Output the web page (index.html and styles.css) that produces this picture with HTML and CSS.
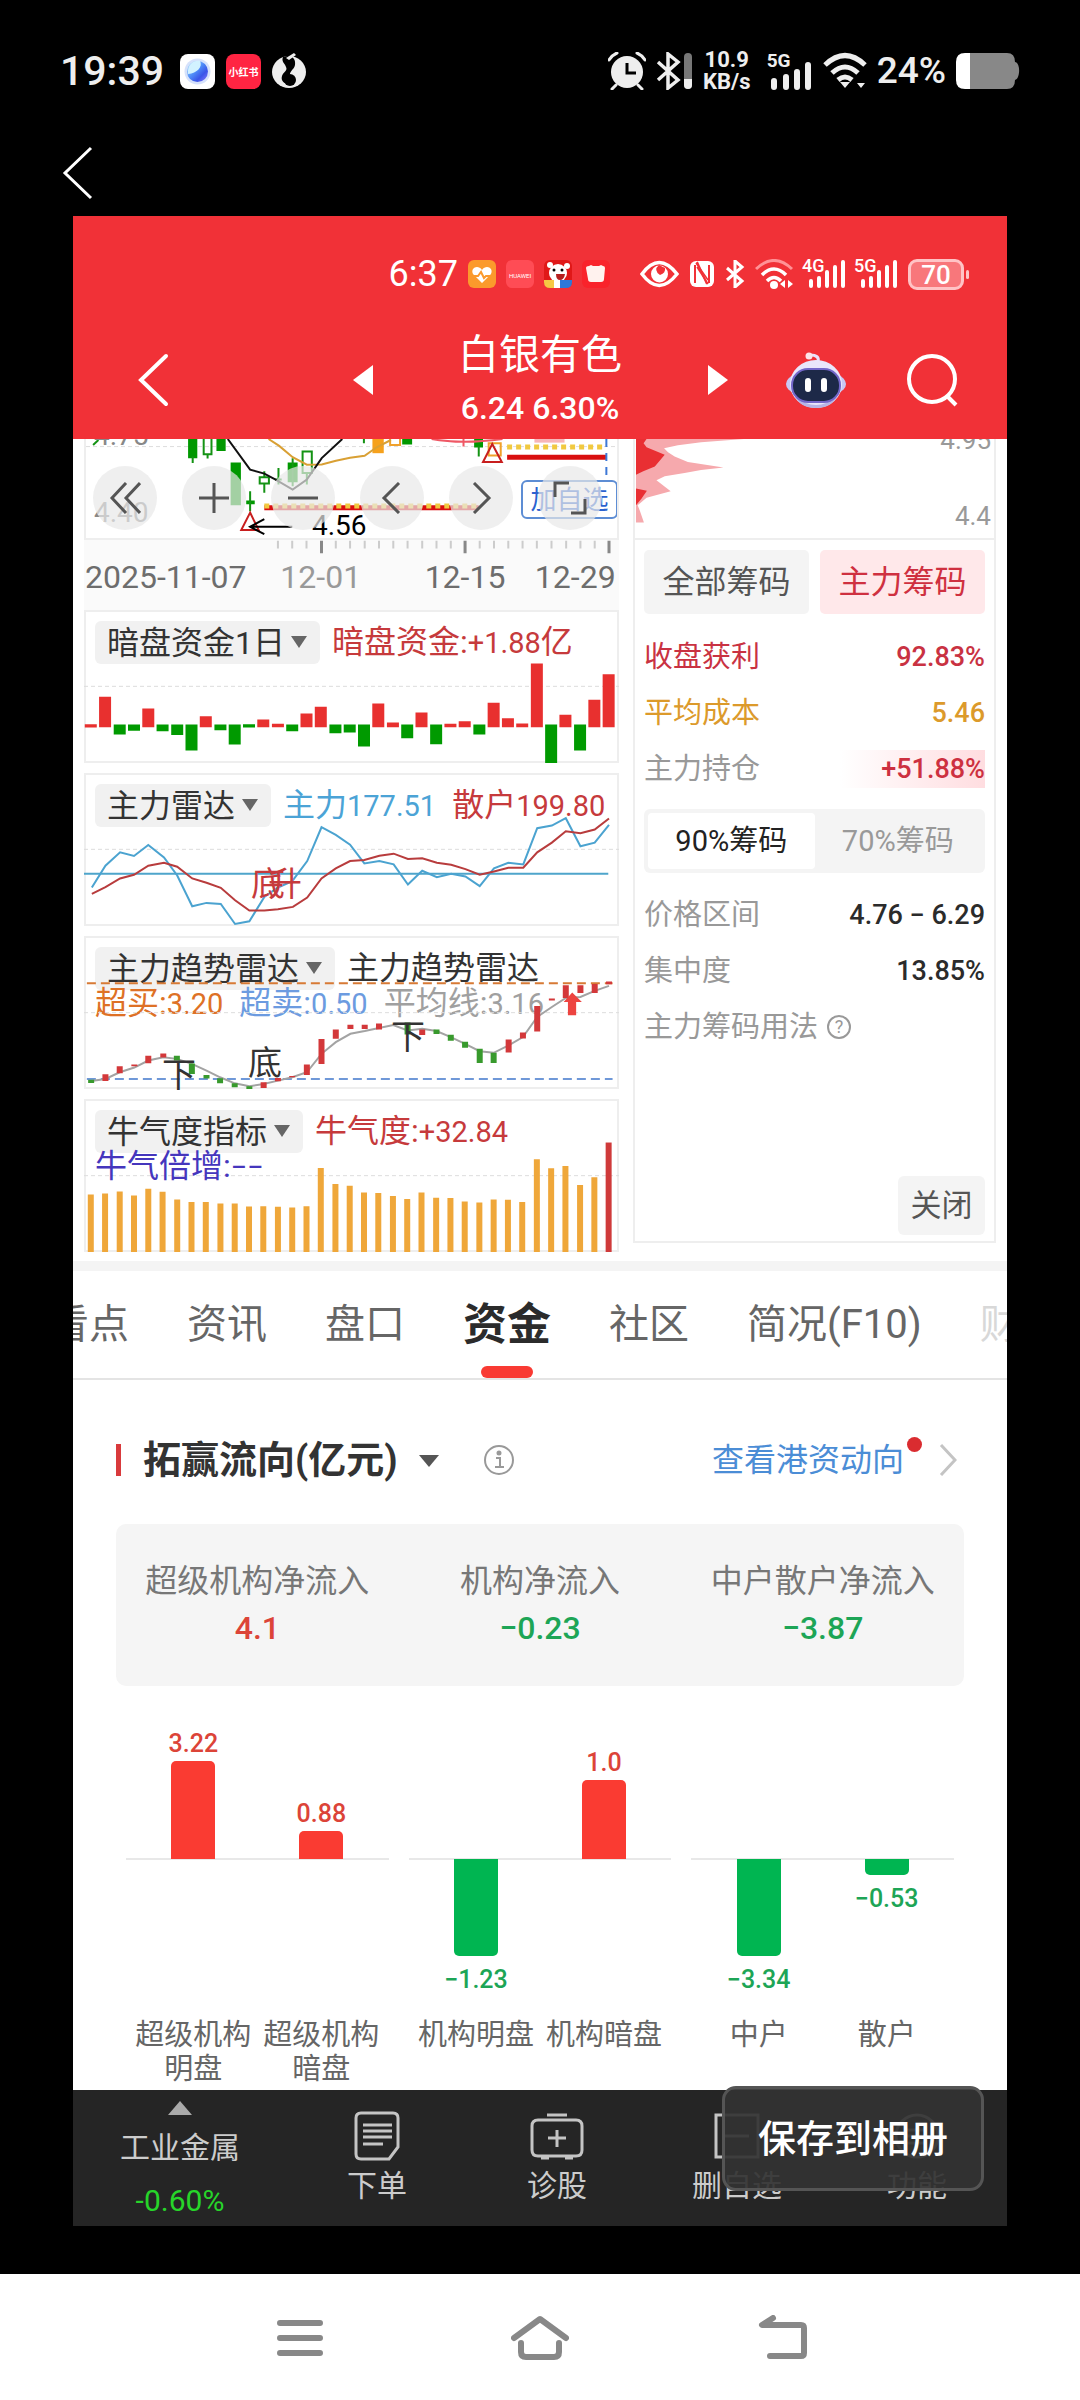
FILE: index.html
```html
<!DOCTYPE html>
<html lang="zh-CN">
<head>
<meta charset="utf-8">
<meta name="viewport" content="width=device-width, initial-scale=1">
<title>白银有色</title>
<link rel="stylesheet" href="styles.css">
</head>
<body>
<div class="device-status">
  <span class="device-time">19:39</span>
  <div class="notices">
    <svg width="35" height="35" viewBox="0 0 35 35"><defs><linearGradient id="lens" x1="0" y1="0" x2="1" y2="1"><stop offset="0" stop-color="#c4f1ff"/><stop offset=".45" stop-color="#4f8df8"/><stop offset=".7" stop-color="#3a55e8"/><stop offset="1" stop-color="#8d7cff"/></linearGradient></defs><rect width="35" height="35" rx="8" fill="#fff"/><circle cx="17.500" cy="17.500" r="13" fill="#d6e2fb"/><circle cx="17.500" cy="17.500" r="10.500" fill="url(#lens)"/><path d="M8 20C7 10 14 6 20 7c3 6-3 12-12 13z" fill="#d2f2ff"/></svg>
    <span class="red-app">小红书</span>
    <svg width="34" height="36" viewBox="0 0 34 36"><ellipse cx="17" cy="19" rx="17" ry="16" fill="#eee"/><path d="M11 4c9-3 13 2 12 8-1 5-6 6-5 11 0 4 4 5 3 7-6 3-13-1-11-7 1-4 6-5 4-9-1-4-5-5-3-10z" fill="#000"/><circle cx="18" cy="27" r="6" fill="#000"/><path d="M14 5l8-5 2 2-7 5z" fill="#eee"/></svg>
  </div>
  <div class="device-icons">
    <svg width="38" height="38" viewBox="0 0 38 38"><circle cx="19" cy="20" r="16" fill="#eee"/><path d="M1 8q3-5 8-7M37 8q-3-5-8-7M8 33l-4 4M30 33l4 4" stroke="#eee" stroke-width="3" stroke-linecap="round"/><path d="M19 11v10h9" fill="none" stroke="#000" stroke-width="3"/></svg>
    <svg width="37" height="38" viewBox="0 0 37 38"><path d="M2 10l20 18-10 8V2l10 8L2 28" fill="none" stroke="#eee" stroke-width="3.500"/><rect x="28" y="1" width="8" height="36" rx="4" fill="#777"/><path d="M28 27h8v6a4 4 0 0 1-8 0z" fill="#eee"/></svg>
    <span class="speed">10.9<br>KB/s</span>
    <span class="cell"><b>5G</b><svg width="44" height="38" viewBox="0 0 44 38"><path d="M5 29v6M17 25v10M28 20v15M39 13v22" stroke="#eee" stroke-width="6" stroke-linecap="round"/></svg></span>
    <svg width="44" height="38" viewBox="0 0 44 38"><path d="M2 13q20-19 40 0M9 21q13-12 26 0M15 28q7-6 14 0" fill="none" stroke="#eee" stroke-width="5"/><path d="M17 30h10l-5 6zM34 31h8l-4 5z" fill="#eee"/></svg>
    <span class="charge">24%</span>
    <svg width="64" height="36" viewBox="0 0 64 36"><path d="M10 0h41q8 0 8 9c6 1 5 17 0 18q0 9-8 9H10z" fill="#888"/><path d="M14 0H9Q0 0 0 9v18q0 9 9 9h5z" fill="#fff"/></svg>
  </div>
</div>
<div class="viewer-bar">
  <button class="plain" aria-label="返回"><svg width="32" height="54" viewBox="0 0 32 54"><path d="M29 2L3 27l26 25" fill="none" stroke="#fff" stroke-width="3"/></svg></button>
</div>

<main class="photo">
  <header class="app-header">
    <div class="app-status">
      <span class="app-time">6:37</span>
      <svg width="28" height="28" viewBox="0 0 28 28"><rect width="28" height="28" rx="6" fill="#fb9a2c"/><path d="M14 23L5 14c-3-6 5-10 9-4 4-6 12-2 9 4z" fill="#fff"/><path d="M3 16h7l3-4 3 6 2-2h7" stroke="#fb9a2c" fill="none" stroke-width="2"/></svg>
      <span class="store">HUAWEI</span>
      <svg width="28" height="28" viewBox="0 0 28 28"><rect width="28" height="28" rx="6" fill="#e01818"/><circle cx="14" cy="13" r="9" fill="#fff"/><circle cx="6" cy="5" r="3" fill="#fff"/><circle cx="23" cy="6" r="3" fill="#fff"/><circle cx="10" cy="10" r="1.500"/><circle cx="18" cy="10" r="1.500"/><path d="M12 14h9q-1 6-5 6t-4-6" fill="#b51f1f"/><path d="M0 20h10v8H6q-6 0-6-6z" fill="#f6c744"/><path d="M16 20h12v2q0 6-6 6h-6z" fill="#2e78d8"/><path d="M10 20h6v8h-6z" fill="#fff"/></svg>
      <svg class="last-notice" width="28" height="28" viewBox="0 0 28 28"><rect width="28" height="28" rx="6" fill="#f9232b"/><path d="M4 8q0-2 3-2l2-1 2 1h6l2-1 2 1q2 0 2 2l-1 11q0 3-3 3H9q-3 0-3-3z" fill="#fff2ee"/></svg>
      <svg width="39" height="28" viewBox="0 0 39 28"><path d="M2 14Q19-9 37 14 19 37 2 14z" fill="none" stroke="#fff" stroke-width="3.500"/><circle cx="19.500" cy="14" r="8.500" fill="#fff"/><path d="M19 5q-6 5 1 10 6-2 5-7z" fill="#f13137"/></svg>
      <svg width="26" height="28" viewBox="0 0 26 28"><rect x="1" y="1" width="24" height="26" rx="6" fill="#fff"/><path d="M6 23V5M8 2l10 22M20 23V5" fill="none" stroke="#f13137" stroke-width="2"/><path d="M8 7l11 17M7 3l12 17" fill="none" stroke="#f13137" stroke-width="1.500"/></svg>
      <svg width="20" height="28" viewBox="0 0 20 28"><path d="M2 8l15 13-7 6V1l7 6L2 20" fill="none" stroke="#fff" stroke-width="3"/></svg>
      <svg width="39" height="30" viewBox="0 0 39 30"><path d="M1 10q18-17 36 0" fill="none" stroke="#ff9296" stroke-width="3"/><path d="M7 16q12-12 24 0M12 22q7-7 14 0" fill="none" stroke="#fff" stroke-width="3.500"/><circle cx="19" cy="26" r="4" fill="#fff"/><path d="M30 21v8l-5-4zM33 21v8l5-4z" fill="#fff"/></svg>
      <span class="mobile"><small>4G</small><svg width="42" height="28" viewBox="0 0 42 28"><path d="M7 21v5M15 18v8M23 12v14M31 7v19M39 2v24" stroke="#fff" stroke-width="4" stroke-linecap="round"/></svg></span>
      <span class="mobile"><small>5G</small><svg width="42" height="28" viewBox="0 0 42 28"><path d="M7 21v5M15 18v8M23 12v14M31 7v19M39 2v24" stroke="#fff" stroke-width="4" stroke-linecap="round"/></svg></span>
      <span class="battery">70</span>
    </div>
    <div class="title-row">
      <button class="plain back" aria-label="返回"><svg width="32" height="54" viewBox="0 0 32 54"><path d="M29 3L4 27l25 24" fill="none" stroke="#fff" stroke-width="4" stroke-linecap="round"/></svg></button>
      <div class="switcher">
        <button class="plain" aria-label="上一只"><svg width="20" height="32" viewBox="0 0 20 32"><path d="M20 1v30L0 16z" fill="#fff"/></svg></button>
        <div class="stock"><h1>白银有色</h1><p>6.24 6.30%</p></div>
        <button class="plain" aria-label="下一只"><svg width="20" height="32" viewBox="0 0 20 32"><path d="M0 1v30l20-15z" fill="#fff"/></svg></button>
      </div>
      <div class="tools">
        <button class="plain" aria-label="助手"><svg width="62" height="56" viewBox="0 0 62 56"><path d="M33 10q2-7-8-7" fill="none" stroke="#e8e2fb" stroke-width="3"/><circle cx="24" cy="4" r="3.500" fill="#fde3e8"/><ellipse cx="31" cy="32" rx="30" ry="14" fill="#c9c8f4"/><ellipse cx="31" cy="32" rx="26" ry="24" fill="#e9e6fb"/><path d="M10 44q21 18 42 0-5 12-21 12T10 44" fill="#b7b5e6"/><rect x="7" y="17" width="48" height="33" rx="16" fill="#1d2948" stroke="#7367c9" stroke-width="2"/><path d="M23 29v8M39 29v8" stroke="#fff" stroke-width="6" stroke-linecap="round"/></svg></button>
        <button class="plain" aria-label="搜索"><svg width="52" height="54" viewBox="0 0 52 54"><circle cx="25" cy="26" r="23" fill="none" stroke="#fff" stroke-width="4"/><path d="M40 43l9 9" stroke="#fff" stroke-width="4"/></svg></button>
      </div>
    </div>
  </header>

  <section class="charts">
    <div class="indicators">
      <div class="kline">
        <svg class="plot" viewBox="40 27 1498 300" preserveAspectRatio="none">
          <path class="dots" d="M40 50H1538"/>
          <g fill="#009800"><path d="M328 27h26v58h-26zM408 27h26v36h-26zM448 98h29v130h-29zM492 213h24v12h-24zM609 98h28v60h-28zM932 27h28v17h-28zM1135 27h25v26h-25z"/></g>
          <path class="ln green" d="M341 80V100M372 27V73H394V27M383 73V86M530 143H556V162H530ZM543 125V143M543 162V190M503 185V246M583 115V165M574 150H592M623 85V170M651 65H677V130H651ZM663 130V165M824 27V40M1148 50V80M60 45L75 30"/>
          <path d="M848 27h32v43h-32z" fill="#f6a11c"/>
          <path class="ln" stroke="#f0a12b" d="M898 27V45H926V27M1176 40H1210V77H1176Z"/>
          <path class="ln" stroke="#d9a034" d="M555 27L585 48 623 82 663 105 705 104 745 93 785 84 826 78 860 52 900 30"/>
          <path class="ln" stroke="#111" d="M440 27L503 120 543 132 575 150 623 180 663 150 705 85 763 27"/>
          <path class="ln" stroke="#ef5865" d="M1015 27Q1100 44 1215 27M1105 27V50"/>
          <path d="M1305 27h85v11h-85z" fill="#f7b6b8"/>
          <path class="ln thick" stroke="#d90f0f" d="M1228 82H1508M543 235H1148"/>
          <path class="ln thick" stroke="#f1c940" stroke-dasharray="5 4" d="M1228 51H1502M543 230H1148"/>
          <path class="ln" stroke="#3d78d6" stroke-dasharray="8 6" d="M1508 27V150"/>
          <path class="ln" stroke="#c81e1e" d="M1186 42L1160 97H1213ZM503 250L478 303H527Z"/>
          <path class="ln" stroke="#000" d="M622 293H503M543 270L503 293 543 315"/>
        </svg>
        <span class="price top">4.75</span>
        <span class="price low">4.40</span>
        <span class="price mark">4.56</span>
        <button class="watch">加自选</button>
        <div class="controls">
          <button aria-label="最早"><svg width="32" height="32" viewBox="0 0 32 32"><path d="M17 1L3 16l14 15M31 1L17 16l14 15"/></svg></button>
          <button aria-label="放大"><svg width="32" height="32" viewBox="0 0 32 32"><path d="M16 1v30M1 16h30"/></svg></button>
          <button aria-label="缩小"><svg width="32" height="32" viewBox="0 0 32 32"><path d="M1 16h30"/></svg></button>
          <button aria-label="左移"><svg width="32" height="32" viewBox="0 0 32 32"><path d="M23 1L8 16l15 15"/></svg></button>
          <button aria-label="右移"><svg width="32" height="32" viewBox="0 0 32 32"><path d="M9 1l15 15L9 31"/></svg></button>
          <button aria-label="全屏"><svg width="34" height="34" viewBox="0 0 34 34"><path d="M2 16V2h14M32 18v14H18" stroke-width="4"/></svg></button>
        </div>
      </div>
      <div class="axis">
        <svg class="ticks" viewBox="40 0 1498 40" preserveAspectRatio="none"><path class="ln" stroke="#ccc" d="M583 2V24M623 2V24M663 2V24M745 2V24M785 2V24M826 2V24M866 2V24M906 2V24M946 2V24M987 2V24M1027 2V24M1067 2V24M1148 2V24M1188 2V24M1228 2V24M1268 2V24M1308 2V24M1349 2V24M1390 2V24M1430 2V24M1470 2V24"/><path class="ln bold" stroke="#888" d="M705 2V38M1107 2V38M1510 2V38"/></svg>
        <div class="dates"><span>2025-11-07</span><span class="faint">12-01</span><span>12-15</span><span>12-29</span></div>
      </div>

      <article class="panel">
        <svg class="plot" viewBox="40 30 1498 457" preserveAspectRatio="none"><path class="dots" d="M40 258H1538"/>
          <path class="ln bar" stroke="#e8302f" d="M59 371V381M99 289V380M220 324V380M381 347V380M542 357V380M583 370V380M663 339V380M703 319V380M864 309V380M905 366V380M985 336V380M1066 370V380M1106 362V380M1187 307V380M1227 353V380M1267 369V380M1308 190V380M1388 343V380M1469 298V380M1509 222V380"/>
          <path class="ln bar" stroke="#009a00" d="M140 372V402M180 372V391M260 372V392M301 372V403M341 372V450M422 372V389M462 372V432M502 371V381M623 372V392M744 372V398M784 372V396M824 372V438M945 372V413M1026 372V431M1147 372V402M1348 372V487M1429 372V450"/></svg>
        <div class="legend"><label class="picker dark-fund"><select aria-label="指标一"><option>暗盘资金1日</option></select></label><span class="red">暗盘资金:<i>+1.88</i>亿</span></div>
      </article>

      <article class="panel">
        <svg class="plot" viewBox="40 520 1498 457" preserveAspectRatio="none"><path class="dots" d="M40 748H1538"/>
          <path class="ln" stroke="#4ea5cb" d="M40 821H1508"/>
          <path class="ln" stroke="#4ba3d0" d="M62 862L100 797 141 757 180 768 220 735 264 772 301 826 343 918 383 908 423 911 463 971 503 963 545 890 583 862 623 843 665 783 705 682 745 705 785 734 825 790 867 783 907 793 947 853 987 812 1028 831 1068 821 1108 829 1148 858 1188 805 1228 788 1270 793 1309 685 1350 677 1389 655 1430 739 1470 728 1510 675"/>
          <path class="ln" stroke="#b83c3d" d="M62 881L100 861 141 835 180 824 220 797 264 788 301 800 343 835 383 848 423 863 463 900 503 931 545 931 583 927 625 920 665 892 705 835 745 805 785 783 825 780 867 767 907 761 947 777 987 775 1028 788 1068 794 1108 807 1148 824 1188 814 1228 803 1270 803 1309 757 1350 728 1389 694 1430 700 1470 689 1510 656"/></svg>
        <div class="legend"><label class="picker radar"><select aria-label="指标二"><option>主力雷达</option></select></label><span class="sky">主力<i>177.51</i></span><span class="red retail">散户<i>199.80</i></span></div>
        <span class="sign s1 red">底</span><span class="sign s2 red">升</span>
      </article>

      <article class="panel">
        <div class="legend"><label class="picker trend"><select aria-label="指标三"><option>主力趋势雷达</option></select></label><span>主力趋势雷达</span></div>
        <div class="legend second"><span class="orange">超买:<i>3.20</i></span><span class="blue">超卖:<i>0.50</i></span><span class="gray">平均线:<i>3.16</i></span></div>
        <svg class="plot" viewBox="40 18 1498 457" preserveAspectRatio="none"><path class="dots" d="M40 247H1538"/>
          <path class="ln" stroke="#d77a35" stroke-dasharray="9 5" d="M48 159H1520"/><path class="ln" stroke="#6f98d8" stroke-dasharray="9 5" d="M48 445H1520"/>
          <path class="ln" stroke="#a3a3a3" d="M60 451L100 445 140 425 181 411 220 390 262 380 300 385 342 400 383 420 421 440 462 458 503 467 543 460 583 450 623 440 664 425 705 370 745 335 786 310 826 302 866 293 906 284 946 300 987 295 1027 302 1067 320 1107 340 1148 362 1187 367 1229 345 1269 320 1309 260 1350 230 1389 203 1430 200 1470 182 1510 167"/>
          <path class="ln slim" stroke="#d3383a" d="M100 431V451M140 407V428M181 402V407M220 376V398M262 369V381M543 455V472M583 442V452M623 436V440M664 402V433M705 326V400M745 297V325M786 283V296M826 283V296M866 279V297M987 297V314M1229 327V366M1269 306V324M1309 227V303M1350 205V211M1389 165V203M1430 165V188M1470 161V188M1510 154V162"/>
          <path class="ln slim" stroke="#389a2d" d="M60 447V457M300 376V390M342 399V430M383 433V444M421 443V458M462 458V470M503 467V475M946 276V312M1027 297V311M1067 313V331M1107 334V352M1148 355V397M1187 367V397"/>
          <path d="M1407 187L1434 215H1418V255H1395V215H1383Z" fill="#ed4440"/></svg>
        <span class="sign t1">下</span><span class="sign t2">底</span><span class="sign t3">下</span>
      </article>

      <article class="panel">
        <svg class="plot" viewBox="40 508 1498 457" preserveAspectRatio="none"><path class="dots" d="M40 737H1538"/>
          <path class="ln slim" stroke="#efa73a" d="M59 793V965M99 790V965M140 784V965M180 796V965M220 776V965M260 785V965M301 808V965M341 816V965M381 816V965M422 820V965M462 820V965M502 829V965M542 828V965M583 830V965M623 832V965M663 828V965M703 714V965M744 762V965M784 767V965M824 787V965M864 789V965M905 798V965M945 807V965M985 787V965M1026 803V965M1066 804V965M1106 814V965M1147 817V965M1187 808V965M1227 809V965M1267 816V965M1308 688V965M1348 715V965M1388 708V965M1429 765V965M1469 742V965"/><path class="ln slim" stroke="#cf3a3a" d="M1509 638V965"/></svg>
        <div class="legend"><label class="picker bull"><select aria-label="指标四"><option>牛气度指标</option></select></label><span class="red">牛气度:<i>+32.84</i></span></div>
        <div class="legend second"><span class="violet">牛气倍增:<i>−−</i></span></div>
      </article>
    </div>

    <aside class="chips">
      <div class="distribution">
        <svg class="plot" viewBox="40 27 1087 300" preserveAspectRatio="none"><path fill="#f6a9ad" d="M43 27H370L240 37 170 46 128 55 140 67 160 80 200 97 308 113 240 121 190 130 130 140 105 152 148 185 75 205 48 228 55 245 67 280H43Z"/><path fill="#e92f33" d="M43 27H75L66 40 75 52 130 75 100 110 65 125 43 135ZM43 177L76 184 60 207 43 228Z"/></svg>
        <span class="level high">4.95</span><span class="level">4.4</span>
      </div>
      <div class="chip-body">
        <div class="pair"><button>全部筹码</button><button class="on">主力筹码</button></div>
        <div class="row profit"><span>收盘获利</span><b>92.83%</b></div>
        <div class="row cost"><span>平均成本</span><b>5.46</b></div>
        <div class="row hold"><span>主力持仓</span><b>+51.88%</b></div>
        <div class="segment"><button class="on">90%筹码</button><button>70%筹码</button></div>
        <div class="row"><span>价格区间</span><b>4.76 − 6.29</b></div>
        <div class="row"><span>集中度</span><b>13.85%</b></div>
        <div class="row help"><span>主力筹码用法</span><button class="question" aria-label="帮助">?</button></div>
        <button class="close">关闭</button>
      </div>
    </aside>
  </section>

  <nav class="tabs">
    <a href="#view">看点</a><a href="#news">资讯</a><a href="#quote">盘口</a><a href="#fund" class="active">资金</a><a href="#club">社区</a><a href="#f10">简况(F10)</a><a href="#finance" class="fading">财务</a>
  </nav>

  <section class="flow" id="fund">
    <div class="flow-head">
      <label class="flow-title"><select aria-label="资金流向"><option>拓赢流向(亿元)</option></select></label>
      <button class="plain info" aria-label="说明"><svg width="32" height="32" viewBox="0 0 32 32" fill="none" stroke="#999" stroke-width="2"><circle cx="16" cy="16" r="14"/><path d="M13 14h4v9M12 23h9"/><circle cx="16" cy="9" r="1.500" fill="#999"/></svg></button>
      <a class="hk" href="#hk">查看港资动向<svg width="18" height="32" viewBox="0 0 18 32"><path d="M2 1l14 15L2 31" fill="none" stroke="#c4c4c4" stroke-width="3"/></svg></a>
    </div>
    <div class="totals">
      <div><span>超级机构净流入</span><b class="up">4.1</b></div>
      <div><span>机构净流入</span><b class="down">−0.23</b></div>
      <div><span>中户散户净流入</span><b class="down">−3.87</b></div>
    </div>
    <div class="bars">
      <div class="group">
        <div class="col"><div class="above up"><b>3.22</b><i style="height:98px"></i></div><div class="below"></div><span>超级机构明盘</span></div>
        <div class="col"><div class="above up"><b>0.88</b><i style="height:28px"></i></div><div class="below"></div><span>超级机构暗盘</span></div>
      </div>
      <div class="group">
        <div class="col"><div class="above"></div><div class="below down"><i style="height:97px"></i><b>−1.23</b></div><span>机构明盘</span></div>
        <div class="col"><div class="above up"><b>1.0</b><i style="height:79px"></i></div><div class="below"></div><span>机构暗盘</span></div>
      </div>
      <div class="group">
        <div class="col"><div class="above"></div><div class="below down"><i style="height:97px"></i><b>−3.34</b></div><span>中户</span></div>
        <div class="col"><div class="above"></div><div class="below down"><i style="height:16px"></i><b>−0.53</b></div><span>散户</span></div>
      </div>
    </div>
  </section>

  <nav class="dock">
    <a class="index" href="#metal"><svg width="24" height="14" viewBox="0 0 24 14"><path d="M12 0l12 14H0z" fill="#aaa"/></svg><span>工业金属</span><b>-0.60%</b></a>
    <a href="#order"><svg width="46" height="50" viewBox="0 0 46 50"><path d="M7 2h32q5 0 5 5v29l-9 12H7q-5 0-5-5V7q0-5 5-5zM9 14h29M9 20h29M9 26h29M9 33h20"/></svg><span>下单</span></a>
    <a href="#diagnose"><svg width="54" height="50" viewBox="0 0 54 50"><path d="M17 4h20M8 9h38q6 0 6 6v24q0 6-6 6H8q-6 0-6-6V15q0-6 6-6zM27 19v17M18 27h18M11 47h8M35 47h8"/></svg><span>诊股</span></a>
    <a href="#remove"><svg width="46" height="50" viewBox="0 0 46 50"><path d="M2 4h42v42H2zM11 25h24"/></svg><span>删自选</span></a>
    <a href="#more"><svg width="46" height="50" viewBox="0 0 46 50"><circle cx="23" cy="25" r="21"/><path d="M13 19h20M13 25h20M13 32h20"/></svg><span>功能</span></a>
    <button class="save">保存到相册</button>
  </nav>
</main>

<nav class="system-nav">
  <button class="plain" aria-label="最近任务"><svg width="46" height="44" viewBox="0 0 46 44"><path d="M3 7h40M3 22h40M3 37h40"/></svg></button>
  <button class="plain" aria-label="主页"><svg width="58" height="46" viewBox="0 0 58 46"><path d="M3 23L29 4l26 19M10 28v9q0 5 5 5h28q5 0 5-5v-9"/></svg></button>
  <button class="plain" aria-label="返回"><svg width="50" height="46" viewBox="0 0 50 46"><path d="M16 3L5 10h39q3 0 3 3v25q0 3-3 3H13"/></svg></button>
</nav>
</body>
</html>
```
FILE: styles.css
```css
* { box-sizing: border-box; }
body { margin: 0; background: #000; color: #333; font: 32px/40px Roboto, "Noto Sans CJK SC", sans-serif; }
h1, p { margin: 0; font-weight: 400; }
i { font-style: normal; }
b { font-weight: 500; }
a { color: inherit; text-decoration: none; }
svg { display: block; flex: none; }
button, select { font: inherit; color: inherit; border: 0; padding: 0; margin: 0; background: none; }
select { appearance: none; outline: 0; }
.plain { display: flex; }

.device-status { display: flex; align-items: center; padding: 50px 60px 0 60px; height: 92px; color: #eee; }
.device-time { font-size: 41px; font-weight: 500; width: 120px; }
.notices, .device-icons { display: flex; align-items: center; gap: 11px; }
.device-icons { margin-left: auto; gap: 10px; }
.red-app { width: 35px; height: 35px; border-radius: 8px; background: #ff2442; color: #fff; font: 700 10px/35px "Noto Sans CJK SC", sans-serif; text-align: center; }
.speed { font-size: 22px; line-height: 22px; font-weight: 700; text-align: center; width: 48px; margin-right: 8px; }
.cell { position: relative; }
.cell b { position: absolute; left: -2px; top: -1px; font-size: 19px; line-height: 20px; font-weight: 700; }
.charge { font-size: 37px; font-weight: 500; }
.viewer-bar { padding: 54px 62px 0; height: 124px; }

.photo { margin: 0 73px; background: #fff; overflow: hidden; }
.app-header { background: #f13137; color: #fff; padding: 40px 37px 10px 64px; }
.app-status { display: flex; align-items: center; justify-content: flex-end; gap: 10px; height: 36px; }
.app-time { font-size: 36px; }
.store { width: 28px; height: 28px; border-radius: 6px; background: #ff4c55; font-size: 6px; line-height: 32px; text-align: center; }
.last-notice { margin-right: 20px; }
.mobile { position: relative; }
.mobile small { position: absolute; left: -2px; top: -3px; font-size: 18px; line-height: 18px; font-weight: 500; }
.battery { position: relative; width: 56px; height: 31px; border: 3px solid #ffc3c5; border-radius: 9px; background: #f8777b; font-size: 26px; line-height: 26px; font-weight: 500; text-align: center; margin-right: 6px; }
.battery::after { content: ""; position: absolute; right: -8px; top: 8px; width: 3px; height: 9px; border-radius: 2px; background: #ffc3c5; }
.title-row { display: grid; grid-template-columns: 1fr 375px 1fr; align-items: center; height: 100px; margin: 37px 11px 0 0; }
.back { justify-self: start; }
.switcher { display: flex; justify-content: space-between; align-items: center; margin: 0 8px 0 -8px; }
.stock { text-align: center; }
.stock h1 { font-size: 41px; line-height: 52px; }
.stock p { font-size: 32px; line-height: 44px; font-weight: 500; padding-top: 5px; }
.tools { display: flex; justify-content: flex-end; align-items: center; gap: 60px; }

.charts { display: grid; grid-template-columns: 535fr 363fr; gap: 14px; padding: 0 11px 9px; border-bottom: 10px solid #f4f4f4; }
.indicators { display: flex; flex-direction: column; gap: 10px; }
.plot { position: absolute; inset: 0; width: 100%; height: 100%; }
.ln { fill: none; stroke-width: 2px; vector-effect: non-scaling-stroke; }
.green { stroke: #149314; }
.thick { stroke-width: 5px; }
.bold { stroke-width: 3px; }
.bar { stroke-width: 12px; }
.slim { stroke-width: 6px; }
.dots { stroke: #ddd; stroke-width: 1px; stroke-dasharray: 4 3; fill: none; vector-effect: non-scaling-stroke; }
.kline { position: relative; height: 101px; border: 2px solid #eee; border-top: 0; overflow: hidden; margin-bottom: -10px; }
.price { position: absolute; font-size: 28px; line-height: 30px; }
.top { left: 8px; top: -18px; color: #888; }
.low { left: 8px; top: 59px; color: #888; }
.mark { left: 226px; top: 72px; color: #000; }
.watch { position: absolute; right: -1px; top: 41px; width: 97px; height: 39px; border: 2px solid #5d8dd4; border-radius: 6px; background: #fff; color: #2b62cf; font-size: 26px; line-height: 34px; }
.controls { position: absolute; left: 7px; right: 15px; top: 27px; display: flex; justify-content: space-between; }
.controls button { width: 64px; height: 64px; border-radius: 50%; background: rgba(232, 232, 232, .7); display: flex; align-items: center; justify-content: center; }
.controls path { fill: none; stroke: #555; stroke-width: 3px; }
.axis { height: 70px; background: #fafafa; margin-bottom: -10px; color: #6d6d6d; }
.ticks { width: 100%; height: 14px; }
.dates { display: grid; grid-template-columns: 195fr 144fr 110fr 84fr; padding-left: 1px; line-height: 46px; white-space: nowrap; }
.faint { color: #999; }
.panel { position: relative; height: 153px; border: 2px solid #eee; white-space: nowrap; }
.panel .plot { inset: -2px; width: calc(100% + 4px); height: calc(100% + 4px); }
.legend { position: relative; display: flex; gap: 12px; padding: 9px 0 0 9px; line-height: 42px; }
.legend i { font-size: 29px; }
.retail { margin-left: 4px; }
.second { padding: 0 0 0 9px; margin-top: -6px; line-height: 38px; gap: 16px; }
.picker { position: relative; flex: none; height: 43px; background: #f1f1f1; border-radius: 6px; }
.picker select { width: 100%; height: 43px; padding-left: 12px; line-height: 42px; display: block; }
.picker::after { content: ""; position: absolute; right: 13px; top: 15px; border: 8px solid transparent; border-top: 12px solid #666; border-bottom: 0; }
.dark-fund { width: 225px; }
.radar { width: 176px; }
.trend { width: 240px; }
.bull { width: 208px; }
.red { color: #c63a3c; }
.sky { color: #4ba3d6; }
.orange { color: #de7126; }
.blue { color: #6c9be0; }
.gray { color: #a0a0a0; }
.violet { color: #4536bd; }
.sign { position: absolute; font-size: 34px; line-height: 36px; }
.s1 { left: 165px; top: 91px; }
.s2 { left: 182px; top: 91px; }
.t1 { left: 76px; top: 119px; }
.t2 { left: 162px; top: 107px; }
.t3 { left: 305px; top: 81px; }

.chips { display: flex; flex-direction: column; border: 2px solid #eee; border-top: 0; margin-bottom: 9px; }
.distribution { position: relative; height: 101px; border-bottom: 2px solid #eee; overflow: hidden; }
.level { position: absolute; right: 3px; top: 62px; font-size: 26px; line-height: 30px; color: #999; }
.high { top: -14px; }
.chip-body { flex: 1; display: flex; flex-direction: column; padding: 10px 9px 6px; font-size: 29px; }
.pair { display: grid; grid-template-columns: 1fr 1fr; gap: 11px; margin-bottom: 15px; font-size: 32px; line-height: 64px; color: #555; }
.pair button { background: #f4f4f4; border-radius: 5px; }
.pair .on { background: #ffe8ea; color: #cf3040; }
.row { display: flex; align-items: center; justify-content: space-between; height: 56px; color: #999; }
.row b { color: #2b2b2b; font-size: 27px; line-height: 38px; }
.profit span, .profit b { color: #c93242; }
.cost span, .cost b { color: #dc9a2b; }
.hold b { color: #cd3040; background: linear-gradient(90deg, #fff, #ffdde0); width: 145px; text-align: right; }
.segment { display: grid; grid-template-columns: 1fr 1fr; padding: 4px; margin: 12px 0 14px; background: #f4f4f4; border-radius: 6px; line-height: 56px; color: #999; }
.segment .on { background: #fff; color: #222; border-radius: 4px; }
.help { justify-content: flex-start; gap: 9px; }
.question { width: 24px; height: 24px; border: 2px solid #999; border-radius: 50%; font-size: 18px; line-height: 20px; color: #999; }
.close { align-self: flex-end; margin-top: auto; width: 87px; height: 59px; background: #f4f4f4; border-radius: 6px; font-size: 31px; color: #555; }

.tabs { display: flex; gap: 58px; height: 109px; padding-left: 36px; margin-left: -60px; border-bottom: 2px solid #e4e4e4; font-size: 40px; line-height: 108px; color: #666; white-space: nowrap; }
.tabs a { flex: none; position: relative; }
.tabs .active { font-size: 44px; font-weight: 700; color: #2b2b2b; }
.active::after { content: ""; position: absolute; left: 18px; right: 18px; bottom: 0; height: 12px; border-radius: 6px; background: #f93a33; }
.tabs .fading { color: #d8d8d8; }

.flow { padding: 0 43px 4px; }
.flow-head { display: flex; align-items: center; height: 144px; padding-top: 15px; }
.flow-title { position: relative; border-left: 5px solid #d93a3c; height: 32px; display: flex; align-items: center; }
.flow-title select { width: 318px; padding-left: 22px; font-size: 38px; line-height: 46px; height: 48px; font-weight: 700; }
.flow-title::after { content: ""; position: absolute; right: 0; top: 11px; border: 10px solid transparent; border-top: 12px solid #555; border-bottom: 0; }
.info { margin-left: 44px; }
.hk { position: relative; display: flex; align-items: center; gap: 35px; margin-left: auto; padding-right: 7px; color: #4b8dd6; }
.hk::after { content: ""; position: absolute; right: 42px; top: -3px; width: 15px; height: 15px; border-radius: 50%; background: #da2c30; }
.totals { display: grid; grid-template-columns: repeat(3, 1fr); background: #f5f5f5; border-radius: 10px; padding: 34px 0; text-align: center; }
.totals div { display: flex; flex-direction: column; line-height: 47px; }
.totals span { color: #777; }
.up b, .up { color: #dc4438; }
.down b, .down { color: #1da556; }
.bars { display: grid; grid-template-columns: repeat(3, 1fr); gap: 20px; padding: 40px 10px 0; }
.group { display: grid; grid-template-columns: 128px 128px; justify-content: center; position: relative; }
.group::before { content: ""; position: absolute; left: 0; right: 0; top: 132px; height: 2px; background: #e8e8e8; }
.col { display: flex; flex-direction: column; text-align: center; position: relative; }
.col span { padding: 0 5px; font-size: 29px; line-height: 34px; color: #666; }
.above, .below { display: flex; flex-direction: column; align-items: center; height: 133px; font-size: 25px; line-height: 34px; }
.above { justify-content: flex-end; }
.below { height: 159px; }
.bars i { width: 44px; border-radius: 5px 5px 0 0; background: #fa3b32; }
.below i { border-radius: 0 0 5px 5px; background: #00b551; margin-bottom: 7px; }

.dock { position: relative; display: grid; grid-template-columns: 214fr repeat(4, 180fr); height: 136px; background: #252525; color: #ccc; font-size: 30px; }
.dock a { display: flex; flex-direction: column; align-items: center; padding-top: 21px; }
.dock span { line-height: 42px; margin-top: 4px; }
.dock path, .dock circle { fill: none; stroke: #c4c4c4; stroke-width: 3px; }
.dock .index { padding-top: 11px; }
.dock .index path { fill: #aaa; stroke: none; }
.dock .index span { margin-top: 12px; }
.index b { color: #27d52a; font-weight: 400; line-height: 40px; margin-top: 12px; }
.save { position: absolute; right: 23px; top: -4px; width: 262px; height: 105px; border: 3px solid #555; border-radius: 14px; background: rgba(50, 50, 50, .92); color: #fff; font-size: 38px; font-weight: 500; }

.system-nav { display: flex; justify-content: center; align-items: center; gap: 188px; height: 127px; padding-left: 4px; margin-top: 48px; background: #fff; }
.system-nav path { fill: none; stroke: #888; stroke-width: 6px; stroke-linecap: round; stroke-linejoin: round; }
```
